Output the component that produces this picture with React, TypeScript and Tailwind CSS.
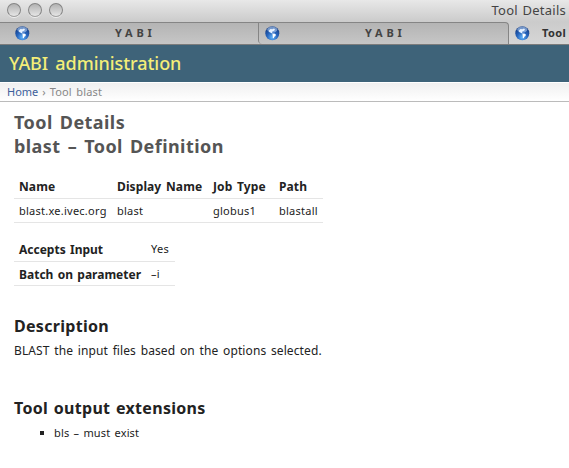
import React from "react";

function Globe() {
  return (
    <svg width="15" height="15" viewBox="0 0 15 15" className="block shrink-0">
      <defs>
        <radialGradient id="globe" cx="50%" cy="80%" r="75%">
          <stop offset="0" stopColor="#62b4fa" />
          <stop offset="0.5" stopColor="#2765bd" />
          <stop offset="1" stopColor="#143a80" />
        </radialGradient>
      </defs>
      <circle cx="7.3" cy="7.3" r="7" fill="url(#globe)" />
      <ellipse cx="7.3" cy="3.6" rx="5" ry="3" fill="#b4d0f4" opacity="0.6" />
      <path d="M4 4.400 5.500 3l2 .2L9 2.600l1 .9-.9 1.200-1.600.6-.5 1.200 1 .8-1 .2-1.600-1.100L4.200 6z" fill="#e6f1ff" />
      <path d="m7.400 7.700 1.800-.2 1.700.9-.4 1.500-1.200.9-.6 1.500-.8-.3-.2-1.800z" fill="#fff" />
    </svg>
  );
}

function WindowButton() {
  return (
    <div className="h-[14px] w-[14px] rounded-full border border-[#858585] border-b-[#a0a0a0] bg-linear-to-b from-[#b2b2b2] to-[#e6e6e6] shadow-[0_1px_0_#eeeeee]" />
  );
}

const th = "px-[5px] pt-[2px] text-left text-[12px] leading-[18px] font-bold tracking-[0.1px] whitespace-nowrap text-[#222] [word-spacing:1.5px]";
const td = "px-[5px] pt-[2px] text-left text-[11px] leading-4 tracking-[0.25px] whitespace-nowrap text-[#222]";
const rowTh = "px-[5px] pt-[2px] text-left text-[12px] leading-[18px] font-bold whitespace-nowrap text-[#222] [word-spacing:1.2px]";
const rowTd = "px-[5px] text-left text-[11px] leading-4 tracking-[0.25px] whitespace-nowrap text-[#222]";

export default function App() {
  return (
    <div className="h-[468px] w-[569px] overflow-hidden bg-white font-['Noto_Sans','Open_Sans',sans-serif] text-[#222]">
      <div className="flex h-[22px] items-center justify-between bg-linear-to-b from-[#e8e8e8] to-[#cbcbcb]">
        <div className="flex gap-[7px] pb-[2px] pl-[7px]">
          <WindowButton />
          <WindowButton />
          <WindowButton />
        </div>
        <div className="pr-[3px] pb-px text-[13px] leading-[19px] tracking-[0.25px] whitespace-nowrap text-[#444] [word-spacing:1px]">Tool Details</div>
      </div>
      <div className="flex h-[23px] border-b border-[#7c7c7c] bg-[#cccccc]">
        <div className="flex w-[258px] items-center border-t border-[#858585] bg-linear-to-b from-[#b4b4b4] to-[#c6c6c6] pl-[15px]">
          <Globe />
          <span className="ml-[85px] pb-px text-[11px] leading-4 font-bold tracking-[3.8px] text-[#444]">YABI</span>
        </div>
        <div className="flex w-[251px] items-center rounded-tr-[4px] rounded-bl-[4px] border-t border-r border-l border-[#858585] bg-linear-to-b from-[#b4b4b4] to-[#c6c6c6] pl-[6px]">
          <Globe />
          <span className="ml-[85px] pb-px text-[11px] leading-4 font-bold tracking-[3.8px] text-[#444]">YABI</span>
        </div>
        <div className="flex w-[60px] items-center bg-linear-to-b from-[#cbcbcb] to-[#d6d6d6] pl-[6px]">
          <Globe />
          <span className="ml-[12px] pb-px text-[11px] leading-4 font-bold tracking-[0.4px] text-[#333]">Tool</span>
        </div>
      </div>
      <header className="flex h-[37px] items-center bg-[#3e6379] pb-px pl-[9px]">
        <h1 className="text-[18px] leading-6 font-medium tracking-[-0.05px] whitespace-nowrap text-[#f4ee78] [word-spacing:2.5px]">YABI administration</h1>
      </header>
      <nav className="flex h-5 items-center gap-[4px] border-t border-b border-t-white border-b-[#bbb] bg-linear-to-b from-[#f0f0f0] to-white pl-[7px] text-[11px] leading-4 whitespace-nowrap text-[#888]">
        <span className="text-[#3d5f9c]">Home</span>
        <span>›</span>
        <span className="tracking-[0.15px] [word-spacing:1.5px]">Tool blast</span>
      </nav>
      <main className="pt-[8px] pl-[14px]">
        <h1 className="text-[18px] leading-6 font-bold tracking-[0.43px] whitespace-nowrap text-[#555] [word-spacing:2px]">
          <span>Tool Details</span>
          <br />
          <span>blast – Tool Definition</span>
        </h1>
        <table className="mt-[16px] w-[309px] table-fixed border-collapse">
          <colgroup>
            <col className="w-[98px]" />
            <col className="w-[96px]" />
            <col className="w-[66px]" />
            <col className="w-[49px]" />
          </colgroup>
          <tbody>
            <tr className="h-[24px] border-b border-[#e5e5e5]">
              <th className={th}>Name</th>
              <th className={th}>Display Name</th>
              <th className={th}>Job Type</th>
              <th className={th}>Path</th>
            </tr>
            <tr className="h-[24px] border-b border-[#e5e5e5]">
              <td className={td}>blast.xe.ivec.org</td>
              <td className={td}>blast</td>
              <td className={td}>globus1</td>
              <td className={td}>blastall</td>
            </tr>
          </tbody>
        </table>
        <table className="mt-[15px] w-[161px] table-fixed border-collapse">
          <colgroup>
            <col className="w-[132px]" />
            <col className="w-[29px]" />
          </colgroup>
          <tbody>
            <tr className="h-[24px] border-b border-[#e5e5e5]">
              <th className={rowTh}>Accepts Input</th>
              <td className={rowTd}>Yes</td>
            </tr>
            <tr className="h-[24px] border-b border-[#e5e5e5]">
              <th className={rowTh}>Batch on parameter</th>
              <td className={rowTd}>–i</td>
            </tr>
          </tbody>
        </table>
        <h2 className="mt-[30px] text-[16px] leading-5 font-bold tracking-[0.3px] whitespace-nowrap">Description</h2>
        <p className="mt-[6px] text-[12px] leading-[18px] tracking-[0.1px] whitespace-nowrap [word-spacing:1.5px]">BLAST the input files based on the options selected.</p>
        <h2 className="mt-[38px] text-[16px] leading-5 font-bold tracking-[0.3px] whitespace-nowrap [word-spacing:1.2px]">Tool output extensions</h2>
        <ul className="mt-[7px]">
          <li className="flex items-center pl-[26px] text-[11px] leading-4 tracking-[0.15px] whitespace-nowrap [word-spacing:1.2px]">
            <span className="mr-[10px] h-1 w-1 bg-[#222]" />
            bls – must exist
          </li>
        </ul>
      </main>
    </div>
  );
}
